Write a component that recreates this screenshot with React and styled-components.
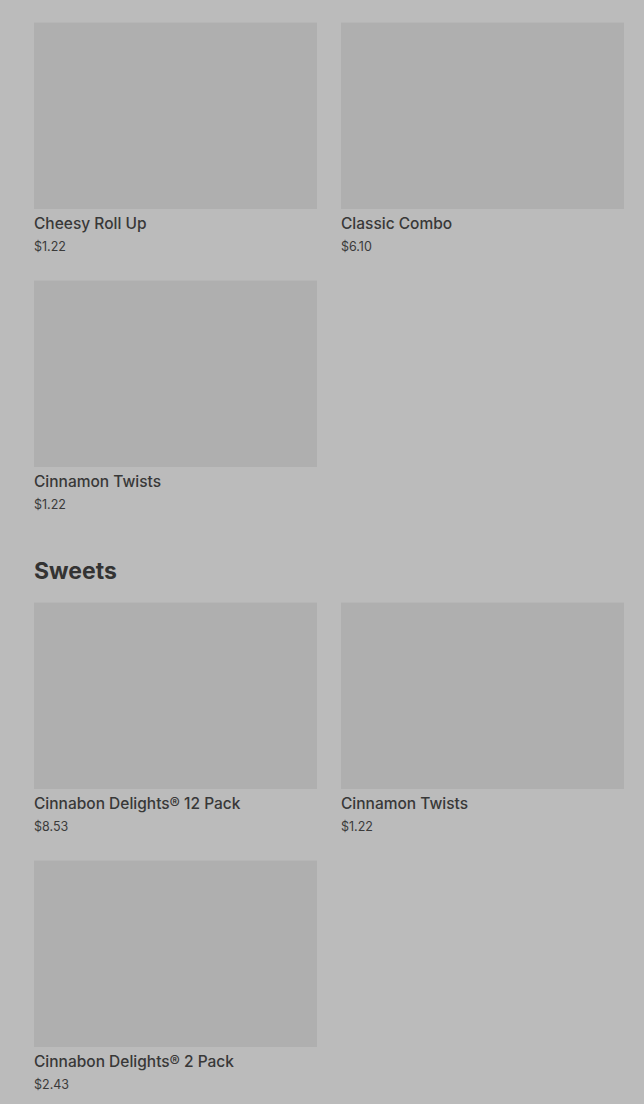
import React from 'react'
import styled, { createGlobalStyle } from 'styled-components'

const GlobalStyle = createGlobalStyle`
  html, body {
    margin: 0;
    padding: 0;
    background: #bbbbbb;
    font-family: Inter, "Noto Sans", Arial, sans-serif;
    color: #333333;
  }
`

const sections = [
  {
    title: null,
    items: [
      { name: 'Cheesy Roll Up', price: '$1.22' },
      { name: 'Classic Combo', price: '$6.10' },
      { name: 'Cinnamon Twists', price: '$1.22' },
    ],
  },
  {
    title: 'Sweets',
    items: [
      { name: 'Cinnabon Delights® 12 Pack', price: '$8.53' },
      { name: 'Cinnamon Twists', price: '$1.22' },
      { name: 'Cinnabon Delights® 2 Pack', price: '$2.43' },
    ],
  },
]

function App() {
  return (
    <>
      <GlobalStyle />
      <Page>
        {sections.map((s, i) => (
          <Section key={i}>
            {s.title && <Heading>{s.title}</Heading>}
            <Grid>
              {s.items.map((item, j) => (
                <Card key={j}>
                  <Thumb />
                  <Name>{item.name}</Name>
                  <Price>{item.price}</Price>
                </Card>
              ))}
            </Grid>
          </Section>
        ))}
      </Page>
    </>
  )
}

const Page = styled.div`
  padding: 22px 20px 0 34px;
  height: 1104px;
  box-sizing: border-box;
  overflow: hidden;
`

const Section = styled.section`
  margin-bottom: 43px;
`

const Heading = styled.h2`
  margin: 0 0 16px;
  font-size: 23px;
  line-height: 30px;
  font-weight: 700;
  color: #333333;
`

const Grid = styled.div`
  display: grid;
  grid-template-columns: 283px 283px;
  column-gap: 24px;
  row-gap: 25px;
`

const Card = styled.div`
  display: flex;
  flex-direction: column;
`

const Thumb = styled.div`
  height: 187px;
  background: #afafaf;
  border-top: 1px solid #b6b6b6;
  box-sizing: border-box;
`

const Name = styled.div`
  margin-top: 5px;
  font-size: 15.5px;
  line-height: 20px;
  font-weight: 500;
  color: #383838;
`

const Price = styled.div`
  margin-top: 5px;
  font-size: 12.5px;
  line-height: 16px;
  color: #3a3a3a;
`

export default App
